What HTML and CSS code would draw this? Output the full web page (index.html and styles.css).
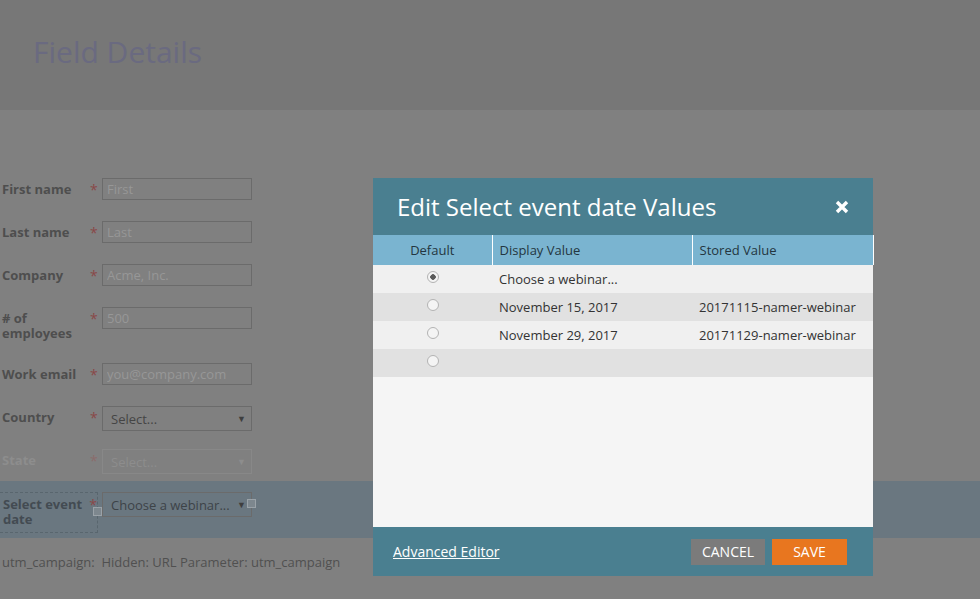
FILE: index.html
```html
<!DOCTYPE html>
<html lang="en">

<head>
    <meta charset="UTF-8">
    <meta name="viewport" content="width=device-width, initial-scale=1.0">
    <title>Field Details</title>
    <link rel="stylesheet" href="styles.css">
</head>

<body>
    <div class="page">
        <header class="page-head">
            <h1>Field Details</h1>
        </header>

        <form class="form">
            <div class="row">
                <div class="label-group"><label class="label">First name</label><span class="req">*</span></div>
                <input class="field" type="text" placeholder="First">
            </div>
            <div class="row">
                <div class="label-group"><label class="label">Last name</label><span class="req">*</span></div>
                <input class="field" type="text" placeholder="Last">
            </div>
            <div class="row">
                <div class="label-group"><label class="label">Company</label><span class="req">*</span></div>
                <input class="field" type="text" placeholder="Acme, Inc.">
            </div>
            <div class="row">
                <div class="label-group"><label class="label"># of employees</label><span class="req">*</span></div>
                <input class="field" type="text" placeholder="500">
            </div>
            <div class="row">
                <div class="label-group"><label class="label">Work email</label><span class="req">*</span></div>
                <input class="field" type="text" placeholder="you@company.com">
            </div>
            <div class="row">
                <div class="label-group"><label class="label">Country</label><span class="req">*</span></div>
                <div class="select"><span>Select...</span><span class="arrow">&#9660;</span></div>
            </div>
            <div class="row row-disabled">
                <div class="label-group"><label class="label">State</label><span class="req">*</span></div>
                <div class="select"><span>Select...</span><span class="arrow">&#9660;</span></div>
            </div>
            <div class="row row-selected">
                <div class="label-group"><label class="label">Select event date</label><span class="req">*</span><i class="handle"></i></div>
                <div class="select"><span>Choose a webinar...</span><span class="arrow">&#9660;</span><i class="handle"></i></div>
            </div>
            <p class="hidden-field">utm_campaign:&nbsp; Hidden: URL Parameter: utm_campaign</p>
        </form>
    </div>

    <!-- values dialog -->
    <div class="modal">
        <div class="modal-head">
            <h2>Edit Select event date Values</h2>
            <svg class="close" width="14" height="14" viewBox="0 0 14 14">
                <path d="M2 2 L12 12 M12 2 L2 12" stroke="#fff" stroke-width="3.4" />
            </svg>
        </div>

        <div class="modal-body">
            <table class="values">
                <colgroup>
                    <col style="width: 119px">
                    <col style="width: 200px">
                    <col style="width: 181px">
                </colgroup>
                <thead>
                    <tr>
                        <th class="col-default">Default</th>
                        <th>Display Value</th>
                        <th>Stored Value</th>
                    </tr>
                </thead>
                <tbody>
                    <tr>
                        <td class="col-default"><input class="radio" type="radio" name="def" checked></td>
                        <td>Choose a webinar...</td>
                        <td></td>
                    </tr>
                    <tr>
                        <td class="col-default"><input class="radio" type="radio" name="def"></td>
                        <td>November 15, 2017</td>
                        <td>20171115-namer-webinar</td>
                    </tr>
                    <tr>
                        <td class="col-default"><input class="radio" type="radio" name="def"></td>
                        <td>November 29, 2017</td>
                        <td>20171129-namer-webinar</td>
                    </tr>
                    <tr>
                        <td class="col-default"><input class="radio" type="radio" name="def"></td>
                        <td></td>
                        <td></td>
                    </tr>
                </tbody>
            </table>
        </div>

        <div class="modal-foot">
            <a class="adv-link" href="#">Advanced Editor</a>
            <button class="btn btn-cancel" type="button">Cancel</button>
            <button class="btn btn-save" type="button">Save</button>
        </div>
    </div>
</body>

</html>
```

FILE: styles.css
```css
/* page behind the dialog, already dimmed */
body {
    margin: 0;
    width: 980px;
    height: 599px;
    overflow: hidden;
    background: #808080;
    font-family: "Open Sans", "Liberation Sans", sans-serif;
}

.page-head {
    height: 110px;
    box-sizing: border-box;
    padding: 32px 0 0 33px;
    background: #777;
}

.page-head h1 {
    margin: 0;
    font-size: 30px;
    font-weight: 400;
    line-height: 40px;
    color: #6a6a80;
}

.form {
    margin-top: 57px;
}

.row {
    display: flex;
    align-items: flex-start;
    min-height: 43px;
    box-sizing: border-box;
    padding-top: 11px;
}

.label-group {
    position: relative;
    display: flex;
    width: 98px;
    box-sizing: border-box;
    margin-right: 4px;
}

.label {
    width: 90px;
    box-sizing: border-box;
    padding: 4px 0 11px 2px;
    font-size: 13px;
    font-weight: 700;
    line-height: 15px;
    color: #4e4e4e;
}

.req {
    padding-top: 4px;
    font-size: 14px;
    line-height: 15px;
    color: #8a4848;
}

.field {
    width: 150px;
    height: 22px;
    box-sizing: border-box;
    margin: 0;
    padding: 0 4px;
    border: 1px solid #6b6b6b;
    background: transparent;
    font-family: inherit;
    font-size: 13px;
}

.field::placeholder {
    color: #979797;
}

.select {
    position: relative;
    display: flex;
    align-items: center;
    justify-content: space-between;
    width: 150px;
    height: 25px;
    box-sizing: border-box;
    padding: 0 5px 0 8px;
    border: 1px solid #6b6b6b;
    font-size: 13px;
    color: #454545;
}

.arrow {
    font-size: 9px;
    color: #3e3e3e;
}

/* disabled field */
.row-disabled .label,
.row-disabled .select,
.row-disabled .arrow {
    color: #8d8d8d;
}

.row-disabled .req {
    color: #8b6c6c;
}

.row-disabled .select {
    border-color: #888;
}

/* field selected in the editor */
.row-selected {
    background: #6a7780;
    padding-bottom: 5px;
}

.row-selected .label-group {
    border: 1px dashed #59666e;
    border-left: 0;
}

.row-selected .label {
    padding: 4px 0 5px 3px;
    color: #434b52;
}

.row-selected .select {
    color: #3d4348;
}

.handle {
    position: absolute;
    top: 50%;
    right: -5px;
    width: 7px;
    height: 7px;
    margin-top: -6px;
    border: 1px solid #9aa2a8;
    background: #7d878e;
}

.hidden-field {
    margin: 0;
    padding: 16px 0 0 2px;
    font-size: 13px;
    line-height: 16px;
    color: #505050;
}

/* dialog */
.modal {
    position: absolute;
    top: 178px;
    left: 373px;
    width: 500px;
}

.modal-head {
    display: flex;
    align-items: center;
    justify-content: space-between;
    height: 57px;
    padding: 0 24px;
    background: #4a7f90;
}

.modal-head h2 {
    margin: 0;
    font-size: 24px;
    font-weight: 400;
    color: #fff;
}

.modal-body {
    height: 292px;
    background: #f5f5f5;
}

.values {
    width: 100%;
    table-layout: fixed;
    border-collapse: collapse;
    font-size: 13px;
    color: #333;
}

.values th {
    height: 30px;
    padding: 0 7px;
    border-right: 1px solid #fff;
    background: #7ab4d0;
    font-weight: 400;
    text-align: left;
    color: #243640;
}

.values td {
    height: 28px;
    padding: 0 7px;
}

.values tbody tr:nth-child(odd) {
    background: #f0f0f0;
}

.values tbody tr:nth-child(even) {
    background: #e1e1e1;
}

.values .col-default {
    text-align: center;
}

.radio {
    display: block;
    width: 12px;
    height: 12px;
    margin: 0 auto 4px;
    border: 1px solid #b3b3b3;
    border-radius: 50%;
    background: #f4f4f4;
    appearance: none;
}

.radio:checked {
    background: radial-gradient(circle, #5a5a5a 0 2.5px, #f4f4f4 3px);
}

.modal-foot {
    display: flex;
    align-items: center;
    height: 49px;
    padding: 0 26px 0 20px;
    background: #4a7f90;
}

.adv-link {
    margin-right: auto;
    font-size: 14px;
    color: #fff;
}

.btn {
    height: 26px;
    border: 0;
    font-family: inherit;
    font-size: 14px;
    text-transform: uppercase;
    color: #fff;
}

.btn-cancel {
    width: 74px;
    background: #7b7b7b;
}

.btn-save {
    width: 75px;
    margin-left: 7px;
    background: #e8761f;
}
```
